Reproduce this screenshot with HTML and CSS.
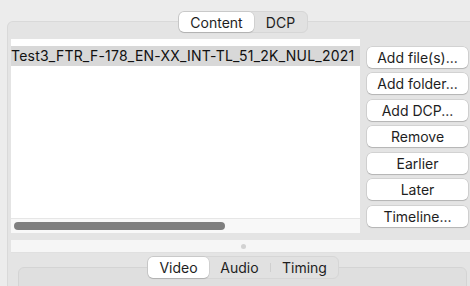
FILE: index.html
```html
<!DOCTYPE html>
<html>
<head>
<meta charset="utf-8">
<link rel="stylesheet" href="styles.css">
</head>
<body>
<div class="window">
  <div class="seg seg-top">
    <div class="seg-item active">Content</div>
    <div class="seg-item">DCP</div>
  </div>
  <div class="pane">
    <div class="upper">
      <div class="list">
        <div class="rows">
          <div class="row selected">Test3_FTR_F-178_EN-XX_INT-TL_51_2K_NUL_2021</div>
        </div>
        <div class="hscroll"><div class="thumb"></div></div>
      </div>
      <div class="buttons">
        <div class="btn">Add file(s)...</div>
        <div class="btn">Add folder...</div>
        <div class="btn">Add DCP...</div>
        <div class="btn">Remove</div>
        <div class="btn">Earlier</div>
        <div class="btn">Later</div>
        <div class="btn">Timeline...</div>
      </div>
    </div>
    <div class="splitter"><div class="dot"></div></div>
    <div class="lower">
      <div class="seg seg-bottom">
        <div class="seg-item active w-video">Video</div>
        <div class="seg-item w-audio">Audio</div>
        <div class="sep"></div>
        <div class="seg-item w-timing">Timing</div>
      </div>
      <div class="subpane"></div>
    </div>
  </div>
</div>
</body>
</html>
```
FILE: styles.css
```css
html, body {
  margin: 0;
  padding: 0;
}
body {
  width: 470px;
  height: 286px;
  overflow: hidden;
  background: #ececec;
  font-family: Inter, "Liberation Sans", sans-serif;
  font-size: 14px;
  letter-spacing: 0.22px;
  color: #1e1e1e;
}
.window {
  width: 486px;
  height: 286px;
  overflow: hidden;
}
.seg {
  display: flex;
  align-items: stretch;
  background: #e1e1e1;
  border: 1px solid #d6d6d6;
  border-radius: 6px;
  box-sizing: border-box;
  position: relative;
  z-index: 1;
}
.seg-top {
  width: 130px;
  height: 22px;
  margin: 11px auto -12px;
}
.seg-item {
  display: flex;
  align-items: center;
  justify-content: center;
  border-radius: 5px;
  letter-spacing: 0;
}
.seg-top .seg-item:first-child { width: 75px; }
.seg-top .seg-item:last-child { flex: 1; }
.seg-item.active {
  background: #ffffff;
  box-shadow: 0 0 0 0.5px rgba(0,0,0,0.12), 0 1px 1px rgba(0,0,0,0.12);
}
.pane {
  margin: 0 7px;
  height: 265px;
  box-sizing: border-box;
  overflow: hidden;
  background: #e4e4e4;
  border: 1px solid #d9d9d9;
  border-bottom: none;
  border-radius: 6px 6px 0 0;
  padding: 17px 3px 0;
}
.upper {
  display: flex;
  gap: 7px;
}
.list {
  width: 349px;
  height: 194px;
  background: #ffffff;
  display: flex;
  flex-direction: column;
}
.rows {
  flex: 1;
  padding-top: 7px;
  overflow: hidden;
}
.row {
  height: 20px;
  line-height: 20px;
  white-space: nowrap;
  color: #111;
}
.row.selected {
  background: #d8d8d8;
}
.hscroll {
  height: 15px;
  background: #f8f8f8;
  border-top: 1px solid #e6e6e6;
  box-sizing: border-box;
  padding: 3px 0 0 3px;
}
.thumb {
  width: 211px;
  height: 8px;
  border-radius: 4px;
  background: #7f7f7f;
}
.buttons {
  width: 101px;
  display: flex;
  flex-direction: column;
  gap: 5.6px;
  padding-top: 7.5px;
}
.btn {
  height: 21px;
  background: #ffffff;
  border-radius: 5px;
  box-shadow: 0 0 0 0.5px rgba(0,0,0,0.16), 0 1px 1px rgba(0,0,0,0.14);
  display: flex;
  align-items: center;
  justify-content: center;
  color: #1e1e1e;
  letter-spacing: 0;
}
.splitter {
  margin-top: 7px;
  height: 12px;
  background: #f6f6f6;
  border-bottom: 1px solid #e0e0e0;
  display: flex;
  align-items: center;
  justify-content: center;
}
.dot {
  width: 5px;
  height: 5px;
  border-radius: 50%;
  background: #d2d2d2;
}
.lower {
  padding-top: 3px;
}
.seg-bottom {
  width: 192px;
  height: 23px;
  margin: 0 auto -12px;
}
.w-video { width: 61px; }
.w-audio { width: 61px; }
.w-timing { flex: 1; }
.sep {
  width: 1px;
  margin: 6px 0;
  background: #cfcfcf;
}
.subpane {
  margin: 0 8px 0 7px;
  height: 30px;
  background: #dfdfdf;
  border: 1px solid #d4d4d4;
  border-radius: 6px;
}
```
